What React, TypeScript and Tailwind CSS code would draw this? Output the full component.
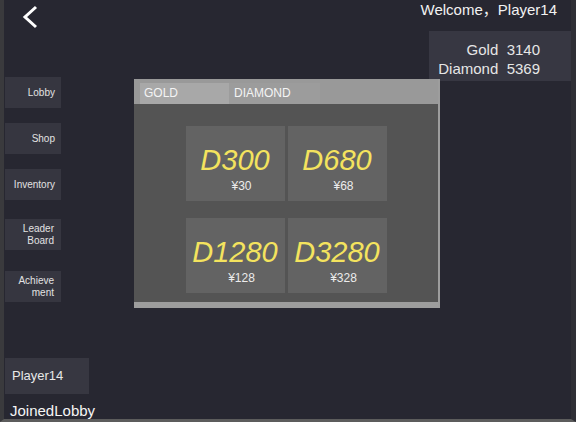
const navItems: string[][] = [
  ["Lobby"],
  ["Shop"],
  ["Inventory"],
  ["Leader", "Board"],
  ["Achieve", "ment"],
];

const packs = [
  { name: "D300", price: "¥30" },
  { name: "D680", price: "¥68" },
  { name: "D1280", price: "¥128" },
  { name: "D3280", price: "¥328" },
];

const font = { fontFamily: '"Liberation Sans", Arial, "Noto Sans CJK SC", sans-serif' };

export default function App() {
  return (
    <div
      className="w-[576px] h-[422px] bg-[#272731] border-l-4 border-l-[#3a3a3d] border-r-[5px] border-r-[#2f2f36] border-b-[3px] border-b-[#5c5c5c] flex flex-col text-white overflow-hidden"
      style={font}
    >
      {/* top: back + welcome */}
      <div className="h-[31px] flex justify-between items-start shrink-0">
        <svg width="20" height="24" viewBox="0 0 20 24" className="ml-[17px] mt-[5px]">
          <polyline points="15,2 4,12 15,22" fill="none" stroke="#ffffff" strokeWidth="3" />
        </svg>
        <div className="text-[15px] leading-[18px] mt-[1px] mr-[14px] text-[#f2f2f2]">Welcome，Player14</div>
      </div>

      {/* currency */}
      <div className="h-[46px] flex justify-end shrink-0">
        <div className="w-[142px] h-[50px] bg-[#373742] flex flex-col items-end pr-[31px] pt-[9px] text-[15px] leading-[19px] text-[#e6e6e6]">
          <div>Gold&nbsp;&nbsp;3140</div>
          <div>Diamond&nbsp;&nbsp;5369</div>
        </div>
      </div>

      <div className="flex flex-1 relative">
        {/* left column */}
        <div className="w-[84px] ml-[1px] flex flex-col shrink-0">
          <div className="flex flex-col gap-[15px]">
            {navItems.map((lines, i) => (
              <div
                key={i}
                className={
                  "w-[56px] h-[31px] bg-[#363640] flex flex-col justify-center items-end pr-[6px] text-[10px] leading-[12px] text-[#e2e2e2] text-right " +
                  (i === 3 ? "mt-[4px]" : "") +
                  (i === 4 ? "mt-[6px]" : "")
                }
              >
                {lines.map((l) => (
                  <div key={l} className={lines.length > 1 ? "pr-[1px]" : ""}>{l}</div>
                ))}
              </div>
            ))}
          </div>
          <div className="mt-[56px] w-[84px] h-[36px] bg-[#373741] flex items-center pl-[7px] text-[13px] text-[#e8e8e8]">
            Player14
          </div>
          <div className="mt-[8px] pl-[5px] text-[15px] leading-[18px] text-[#f5f5f5]">JoinedLobby</div>
        </div>

        {/* shop panel */}
        <div className="ml-[45px] mt-[2px] w-[306px] h-[229px] bg-[#9d9d9d] flex flex-col pr-[2px] pb-[6px] relative z-10">
          <div className="h-[25px] pt-[4px] pl-[6px] flex shrink-0 bg-[#999999]">
            <div className="w-[89px] bg-[#a8a8a8] pl-[4px] text-[12px] leading-[21px] text-[#f4f4f4]">GOLD</div>
            <div className="w-[91px] bg-[#9c9c9c] pl-[5px] text-[12px] leading-[21px] text-[#f4f4f4]">DIAMOND</div>
          </div>
          <div className="flex-1 bg-[#545454] pt-[22px] grid grid-cols-[99px_99px] auto-rows-[75px] gap-x-[3px] gap-y-[17px] justify-center content-start">
            {packs.map((p) => (
              <div key={p.name} className="bg-[#636363] flex flex-col items-center pt-[20px]">
                <div className="italic text-[29px] leading-[29px] text-[#f4e35e]">{p.name}</div>
                <div className="mt-[5px] pl-[13px] text-[12px] leading-[12px] text-[#ececec]">{p.price}</div>
              </div>
            ))}
          </div>
        </div>
      </div>
    </div>
  );
}
